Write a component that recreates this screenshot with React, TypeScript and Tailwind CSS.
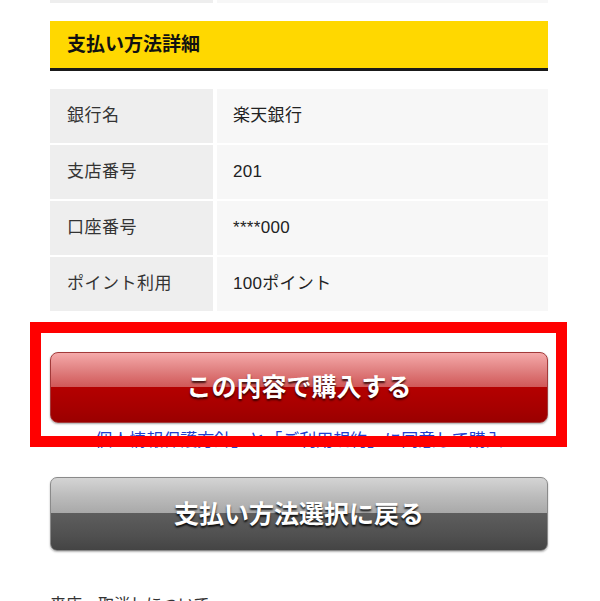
import React from "react";

const rows: [string, string][] = [
  ["銀行名", "楽天銀行"],
  ["支店番号", "201"],
  ["口座番号", "****000"],
  ["ポイント利用", "100ポイント"],
];

export default function App() {
  return (
    <div className="relative w-[600px] h-[601px] overflow-hidden bg-white font-[Liberation_Sans,Noto_Sans_CJK_JP,sans-serif]">
      <div className="ml-[50px] w-[498px]">
        {/* tail of previous table */}
        <div className="flex h-[3px] gap-[4px]">
          <div className="w-[163px] bg-[#eeeeee]" />
          <div className="flex-1 bg-[#f7f7f7]" />
        </div>

        {/* section header */}
        <div className="mt-[18px] h-[50px] bg-[#ffd800] border-b-[3px] border-[#1a1a1a] flex items-center pl-[17px]">
          <span className="text-[19px] font-bold text-[#111] leading-none">支払い方法詳細</span>
        </div>

        {/* details table */}
        <div className="mt-[18px] flex flex-col gap-[2px]">
          {rows.map(([k, v]) => (
            <div key={k} className="flex h-[54px] gap-[4px]">
              <div className="w-[163px] bg-[#eeeeee] flex items-center pl-[17px] text-[17px] tracking-[0.5px] text-[#333]">
                {k}
              </div>
              <div className="flex-1 bg-[#f7f7f7] flex items-center pl-[16px] text-[17px] tracking-[0.3px] text-[#222]">
                {v}
              </div>
            </div>
          ))}
        </div>

        {/* purchase button */}
        <button className="mt-[41px] w-full h-[71px] rounded-[8px] border border-[#a33a3a] bg-[linear-gradient(to_bottom,#f5aaaa_0%,#e08080_25%,#d05656_50%,#b40000_50%,#a60000_80%,#9a0000_100%)] shadow-[0_1px_2px_rgba(0,0,0,0.35)] flex items-center justify-center">
          <span className="text-white font-bold text-[25px] leading-none [text-shadow:0_2px_2px_rgba(40,0,0,0.85)]">
            この内容で購入する
          </span>
        </button>

        {/* agreement link */}
        <div className="mt-[8px] h-[20px] leading-[20px] text-center text-[17px] text-[#2040d0] whitespace-nowrap">
          個人情報保護方針」と「ご利用規約」に同意して購入
        </div>

        {/* back button */}
        <button className="mt-[26px] w-full h-[74px] rounded-[7px] border border-[#8a8a8a] bg-[linear-gradient(to_bottom,#d4d4d4_0%,#bcbcbc_25%,#a9a9a9_48%,#5e5e5e_48%,#505050_80%,#444444_100%)] shadow-[0_1px_2px_rgba(0,0,0,0.3)] flex items-center justify-center">
          <span className="text-white font-bold text-[25px] leading-none [text-shadow:0_2px_2px_rgba(0,0,0,0.85)]">
            支払い方法選択に戻る
          </span>
        </button>

        <div className="mt-[44px] text-[16px] text-[#333] whitespace-nowrap leading-[20px]">
          来店・取消しについて
        </div>
      </div>

      {/* highlight frame */}
      <div className="absolute left-[30px] top-[322px] w-[537px] h-[125px] border-[11px] border-[#ff0000]" />
    </div>
  );
}
